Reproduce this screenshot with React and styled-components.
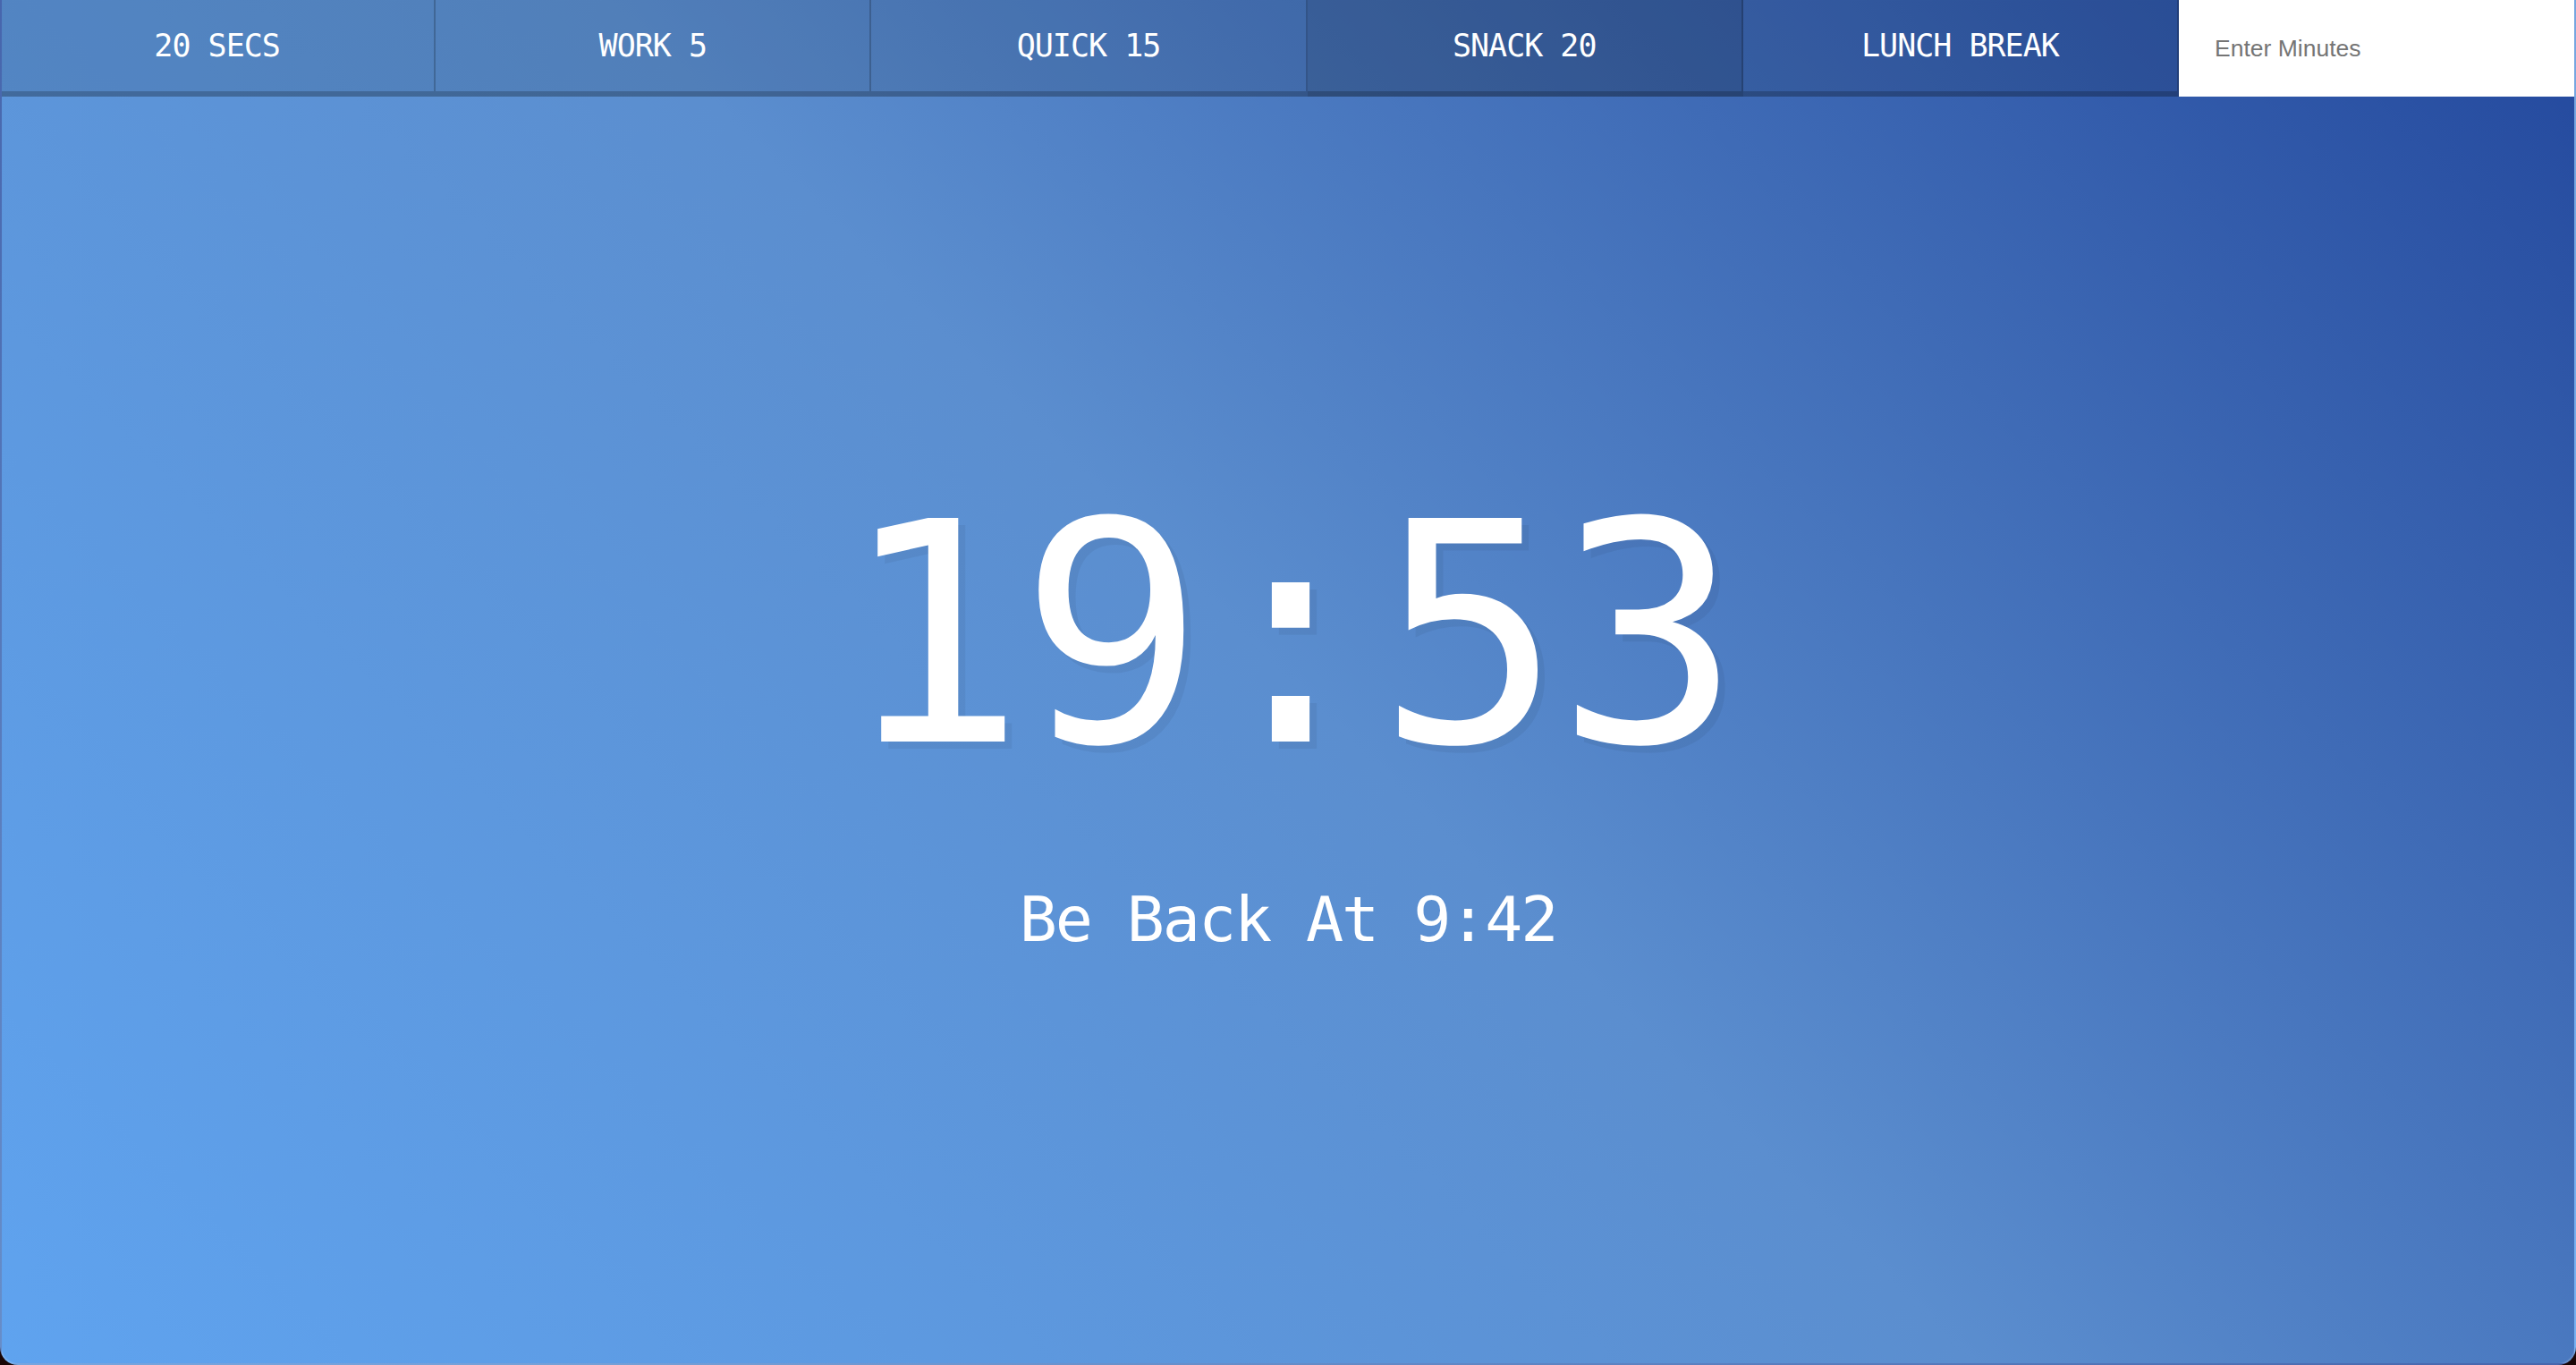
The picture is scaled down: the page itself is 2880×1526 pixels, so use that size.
import React, { useState } from 'react';
import styled, { createGlobalStyle } from 'styled-components';

const GlobalStyle = createGlobalStyle`
  *, *::before, *::after {
    box-sizing: border-box;
  }
  html, body {
    margin: 0;
    padding: 0;
    background: #1a0606;
  }
  body {
    text-align: center;
    font-family: 'DejaVu Sans Mono', monospace;
  }
`;

const Timer = styled.div`
  display: flex;
  flex-direction: column;
  min-height: 100vh;
  height: 100vh;
  overflow: hidden;
  border: 2px solid rgba(255, 255, 255, 0.16);
  border-top: 0;
  border-radius: 0 0 20px 20px;
  background: linear-gradient(45deg, #5fa3ef 0%, #5b8ecf 50%, #23489d 100%);
`;

const Controls = styled.div`
  display: flex;
  height: 108px;
  margin: 0 -2px;
`;

const TimerButton = styled.button`
  flex: 1;
  border: 0;
  cursor: pointer;
  color: white;
  font-family: 'DejaVu Sans Mono', monospace;
  font-size: 35px;
  line-height: 62px;
  letter-spacing: -1px;
  text-transform: uppercase;
  padding: 20px;
  background: ${p => (p.$active ? 'rgba(0, 0, 0, 0.2)' : 'rgba(0, 0, 0, 0.1)')};
  border-bottom: 6px solid rgba(0, 0, 0, 0.2);
  border-right: 2px solid rgba(0, 0, 0, 0.2);
  &:focus {
    outline: 0;
  }
`;

const Form = styled.form`
  flex: 0 0 444px;
  display: flex;
  margin: 0;
`;

const MinutesInput = styled.input`
  flex: 1;
  min-width: 0;
  height: 108px;
  border: 0;
  padding: 0 40px;
  background: white;
  font-family: 'Liberation Sans', Arial, sans-serif;
  font-size: 26.5px;
  color: #333;
  &::placeholder {
    color: #757575;
  }
  &:focus {
    outline: 0;
  }
`;

const Display = styled.div`
  flex: 1;
  display: flex;
  flex-direction: column;
  align-items: center;
  justify-content: center;
  padding-bottom: 44px;
`;

const TimeLeft = styled.h1`
  margin: 0;
  color: white;
  font-weight: 100;
  font-size: 343px;
  line-height: 400px;
  letter-spacing: -6.5px;
  text-shadow: 8px 8px 0 rgba(0, 0, 0, 0.05);
`;

const EndTime = styled.p`
  margin: 67px 0 0;
  color: white;
  font-size: 70px;
  line-height: 100px;
  letter-spacing: -2.1px;
`;

const presets = [
  { label: '20 Secs', seconds: 20 },
  { label: 'Work 5', seconds: 300 },
  { label: 'Quick 15', seconds: 900 },
  { label: 'Snack 20', seconds: 1200 },
  { label: 'Lunch Break', seconds: 3600 },
];

const App = () => {
  const [active, setActive] = useState(1200);

  return (
    <>
      <GlobalStyle />
      <Timer>
        <Controls>
          {presets.map(p => (
            <TimerButton key={p.seconds} $active={p.seconds === active} onClick={() => setActive(p.seconds)}>
              {p.label}
            </TimerButton>
          ))}
          <Form onSubmit={e => e.preventDefault()}>
            <MinutesInput type="text" name="minutes" placeholder="Enter Minutes" />
          </Form>
        </Controls>
        <Display>
          <TimeLeft>19:53</TimeLeft>
          <EndTime>Be Back At 9:42</EndTime>
        </Display>
      </Timer>
    </>
  );
};

export default App;
